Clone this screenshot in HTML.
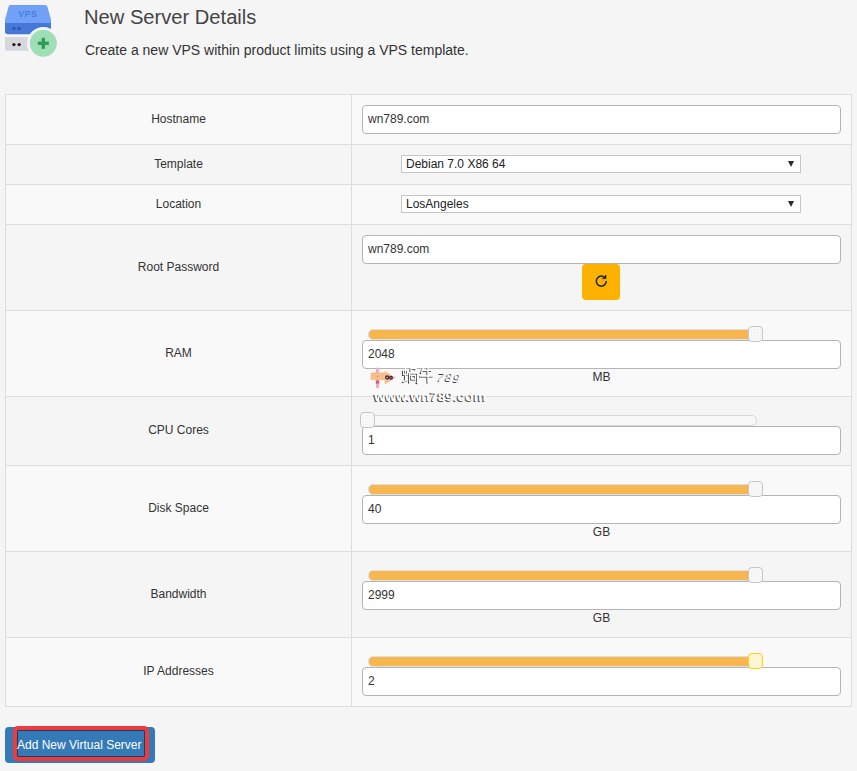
<!DOCTYPE html>
<html><head><meta charset="utf-8">
<style>
*{box-sizing:border-box;margin:0;padding:0}
html,body{width:857px;height:771px;overflow:hidden;background:#f5f5f5;font-family:"Liberation Sans",sans-serif;color:#333;font-size:12px;position:relative}
.abs{position:absolute}
h1{position:absolute;left:84px;top:4.5px;font-size:20.15px;font-weight:normal;color:#444;white-space:nowrap;line-height:24px}
.sub{position:absolute;left:85px;top:42px;font-size:14px;color:#333;white-space:nowrap;line-height:16px}
.tbl{position:absolute;left:5px;top:94px;width:847px;height:613px;border:1px solid #ddd}
.row{position:absolute;left:0;width:845px;border-bottom:1px solid #ddd}
.odd{background:#f9f9f9}
.even{background:#f5f5f5}
.vline{position:absolute;left:345px;top:0;bottom:0;width:1px;background:#ddd}
.lbl{position:absolute;left:0;width:345px;text-align:center;font-size:12px;color:#333;line-height:14px;white-space:nowrap}
.inp{position:absolute;left:356px;width:479px;height:29px;background:#fff;border:1px solid #b4b4b4;border-radius:4px;font-size:12px;color:#333;padding-left:5px;line-height:27px}
.sel{position:absolute;left:395px;width:400px;height:18px;background:#fff;border:1px solid #c6c6c6;font-size:12px;color:#222;padding-left:4px;line-height:16px}
.sel .arr{position:absolute;right:6px;top:5px;width:0;height:0;border-left:3px solid transparent;border-right:3px solid transparent;border-top:6px solid #2a2a2a}
.track{position:absolute;left:362px;width:389px;height:11px;border-radius:5px;border:1px solid #dce0e7;background:#f7b64e;top:18px}
.track.grey{background:#f8f8f8;border-color:#dadada}
.handle{position:absolute;width:15px;height:16px;border-radius:4px;border:1px solid #c5c5c5;background:#f8f8f8 radial-gradient(circle,#ececec 0.7px,transparent 1px) 1px 1px/3px 3px;top:15px;z-index:2}
.unit{position:absolute;left:346px;width:499px;text-align:center;font-size:12px;color:#333;line-height:14px}
</style></head><body>

<svg class="abs" style="left:0;top:0" width="70" height="60" viewBox="0 0 70 60">
  <path d="M9.8 4.9 H45.2 Q46.8 4.9 47.3 6.4 L51 19.5 V23 H5 V19.5 L8.7 6.4 Q9.2 4.9 9.8 4.9Z" fill="#70a1f6"/>
  <text x="27.6" y="16.8" font-family="Liberation Sans" font-weight="bold" font-size="8.6" fill="#4a7ddf" text-anchor="middle" letter-spacing="0.7" transform="skewX(-6) translate(1.7,0)">VPS</text>
  <path d="M5 23 H51 V31.5 Q51 34.3 48 34.3 H8 Q5 34.3 5 31.5Z" fill="#4477d8"/>
  <circle cx="13.9" cy="28.6" r="1.7" fill="#2a58a6"/>
  <circle cx="19.2" cy="28.6" r="1.7" fill="#2a58a6"/>
  <path d="M5 37 H36 V50.8 H7 Q5 50.8 5 48.8Z" fill="#d6d8dd"/>
  <circle cx="13.9" cy="44.6" r="1.7" fill="#222"/>
  <circle cx="19.2" cy="44.6" r="1.7" fill="#222"/>
  <circle cx="43.3" cy="43.3" r="16.3" fill="#f5f5f5"/>
  <circle cx="43.3" cy="43.3" r="13.5" fill="#9fdfb6"/>
  <rect x="37.8" y="41.6" width="11" height="3.4" fill="#2c9c57"/>
  <rect x="41.6" y="37.8" width="3.4" height="11" fill="#2c9c57"/>
</svg>

<h1>New Server Details</h1>
<div class="sub">Create a new VPS within product limits using a VPS template.</div>

<div class="tbl">
  <div class="row odd" style="top:0;height:50px">
    <div class="lbl" style="top:17px">Hostname</div>
    <div class="inp" style="top:10px">wn789.com</div>
  </div>
  <div class="row even" style="top:50px;height:40px">
    <div class="lbl" style="top:12px">Template</div>
    <div class="sel" style="top:10px">Debian 7.0 X86 64<span class="arr"></span></div>
  </div>
  <div class="row odd" style="top:90px;height:40px">
    <div class="lbl" style="top:12px">Location</div>
    <div class="sel" style="top:10px">LosAngeles<span class="arr"></span></div>
  </div>
  <div class="row even" style="top:130px;height:86px">
    <div class="lbl" style="top:35px">Root Password</div>
    <div class="inp" style="top:10px">wn789.com</div>
    <div class="abs" style="left:576px;top:39px;width:38px;height:36px;background:#fdb200;border-radius:4px"><svg class="abs" style="left:0;top:0" width="38" height="36" viewBox="0 0 38 36"><path d="M24.3 17 A5 5 0 1 1 21.6 12.7" fill="none" stroke="#1a2238" stroke-width="1.5"/><path d="M20.3 14.6 L24 14.6 L24 11 Z" fill="#1a2238" stroke="#1a2238" stroke-width="0.6" stroke-linejoin="round"/></svg></div>
  </div>
  <div class="row odd" style="top:216px;height:86px">
    <div class="lbl" style="top:35px">RAM</div>
    <div class="track"></div>
    <div class="handle" style="left:742px"></div>
    <div class="inp" style="top:29px">2048</div>
    <div class="unit" style="top:59px">MB</div>
  </div>
  <div class="row even" style="top:302px;height:69px">
    <div class="lbl" style="top:26px">CPU Cores</div>
    <div class="track grey"></div>
    <div class="handle" style="left:354px"></div>
    <div class="inp" style="top:29px">1</div>
  </div>
  <div class="row odd" style="top:371px;height:86px">
    <div class="lbl" style="top:35px">Disk Space</div>
    <div class="track"></div>
    <div class="handle" style="left:742px"></div>
    <div class="inp" style="top:29px">40</div>
    <div class="unit" style="top:59px">GB</div>
  </div>
  <div class="row even" style="top:457px;height:86px">
    <div class="lbl" style="top:35px">Bandwidth</div>
    <div class="track"></div>
    <div class="handle" style="left:742px"></div>
    <div class="inp" style="top:29px">2999</div>
    <div class="unit" style="top:59px">GB</div>
  </div>
  <div class="row odd" style="top:543px;height:68px;border-bottom:none">
    <div class="lbl" style="top:26px">IP Addresses</div>
    <div class="track"></div>
    <div class="handle" style="left:742px;border-color:#fcd113;background:#fdf5d4"></div>
    <div class="inp" style="top:29px">2</div>
  </div>
  <div class="vline"></div>
</div>


<svg class="abs" style="left:360px;top:362px;z-index:3" width="140" height="46" viewBox="0 0 140 46">
  <rect x="16" y="5.5" width="3" height="21" rx="1.4" fill="#f4a8c6"/>
  <rect x="15.8" y="18.6" width="3.4" height="3" fill="#e2507c"/>
  <path d="M12 10.8 H25 L24.8 9.3 L35.3 15.7 L25 22.1 L24.8 17.75 H12 Q10.8 17.75 10.8 16.5 V12 Q10.8 10.8 12 10.8Z" fill="#f8c088" stroke="#eab07a" stroke-width="0.4"/>
  <circle cx="17.6" cy="14.2" r="0.7" fill="#d08860"/>
  <circle cx="27.2" cy="15.5" r="1.5" fill="none" stroke="#3a1e5a" stroke-width="1.3"/>
  <circle cx="31" cy="15.8" r="1.3" fill="none" stroke="#3a1e5a" stroke-width="1.3"/>
  <defs>
    <g id="wmg" fill="none" stroke-linecap="butt">
      <path d="M43.5 8 V12.5 H47.5 V8 H43.5 M45.5 6 V19 M43 19.8 L48.2 17.6"/>
      <path d="M51 6.5 H56 V9.5 H51Z M49.5 20.5 V11 H57.5 V20.5 L56.5 20 M51.5 13.5 V17 H55.5 V13.5Z"/>
      <path d="M63.4 6 L61 11 M61.5 8.5 H72 M60 14 H73.5 M68 5.5 V20.7"/>
    </g>
  </defs>
  <use href="#wmg" stroke="#333" stroke-width="1.3" transform="translate(-0.9,0.9)"/>
  <use href="#wmg" stroke="#fff" stroke-width="1.3"/>
  <g font-family="Liberation Sans" font-style="italic" font-size="11.5" transform="translate(77,19) skewX(-10) translate(-77,-19)">
    <text x="76.2" y="19.9" fill="#333" letter-spacing="1.6">7<tspan dy="0">8</tspan><tspan dy="1.5">9</tspan></text>
    <text x="77.1" y="19" fill="#fff" letter-spacing="1.6">7<tspan dy="0">8</tspan><tspan dy="1.5">9</tspan></text>
  </g>
  <g font-family="Liberation Sans" font-weight="bold" font-size="13">
    <text x="13.0" y="39.9" fill="#555" textLength="112" lengthAdjust="spacingAndGlyphs">www.wn789.com</text>
    <text x="14.2" y="38.7" fill="#fff" textLength="112" lengthAdjust="spacingAndGlyphs">www.wn789.com</text>
  </g>
</svg>
<div class="abs" style="left:5px;top:727px;width:150px;height:36px;background:#337ab7;border-radius:4px"></div>
<div class="abs" style="left:13px;top:726px;width:136px;height:35px;border:4px solid #ee3a3a;border-radius:5px;box-shadow:inset 0 0 0 1px #173f68"></div>
<div class="abs" style="left:17px;top:738px;color:#fff;font-size:12px;line-height:14px;white-space:nowrap">Add New Virtual Server</div>

</body></html>
